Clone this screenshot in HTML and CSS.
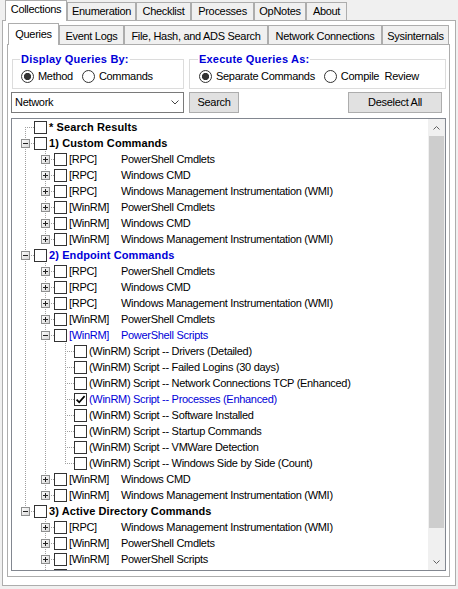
FILE: index.html
```html
<!DOCTYPE html>
<html>
<head>
<meta charset="utf-8">
<title>Collections</title>
<link rel="stylesheet" href="styles.css">
</head>
<body>
<svg class="defs" width="0" height="0" aria-hidden="true">
  <defs>
    <linearGradient id="bxg" x1="0" y1="0" x2="1" y2="1">
      <stop offset="0" stop-color="#ffffff"/>
      <stop offset="1" stop-color="#d6d6d6"/>
    </linearGradient>
    <symbol id="plus" viewBox="0 0 9 9">
      <rect x="0.5" y="0.5" width="8" height="8" fill="url(#bxg)" stroke="#8e8f8f"/>
      <path d="M2 4.5h5M4.5 2v5" stroke="#222"/>
    </symbol>
    <symbol id="minus" viewBox="0 0 9 9">
      <rect x="0.5" y="0.5" width="8" height="8" fill="url(#bxg)" stroke="#8e8f8f"/>
      <path d="M2 4.5h5" stroke="#222"/>
    </symbol>
    <symbol id="check" viewBox="0 0 11 11">
      <path d="M1.6 5.6l2.6 2.7 5.4-6.2" stroke="#000" stroke-width="1.7" fill="none"/>
    </symbol>
  </defs>
</svg>

<div class="window">
  <div class="tabstrip outer-tabs">
    <div class="tab active t-collections">Collections</div>
    <div class="tab t-enum">Enumeration</div>
    <div class="tab t-check">Checklist</div>
    <div class="tab t-proc">Processes</div>
    <div class="tab t-opnotes">OpNotes</div>
    <div class="tab t-about">About</div>
  </div>
  <div class="outer-panel">
    <div class="tabstrip inner-tabs">
      <div class="tab active t-queries">Queries</div>
      <div class="tab t-events">Event Logs</div>
      <div class="tab t-file">File, Hash, and ADS Search</div>
      <div class="tab t-net">Network Connections</div>
      <div class="tab t-sys">Sysinternals</div>
    </div>
    <div class="inner-panel">
      <div class="groups">
        <div class="group g1">
          <div class="group-title">Display Queries By:</div>
          <div class="radios">
            <label class="radio"><span class="dot on"></span>Method</label>
            <label class="radio"><span class="dot"></span>Commands</label>
          </div>
        </div>
        <div class="group g2">
          <div class="group-title">Execute Queries As:</div>
          <div class="radios">
            <label class="radio"><span class="dot on"></span>Separate Commands</label>
            <label class="radio"><span class="dot"></span>Compile&nbsp; Review</label>
          </div>
        </div>
      </div>

      <div class="toolbar">
        <div class="combo">
          <span class="combo-text">Network</span>
          <svg class="chev" width="8" height="5" viewBox="0 0 8 5"><path d="M0.5 0.5l3.5 3.5 3.5-3.5" stroke="#444" fill="none"/></svg>
        </div>
        <div class="btn btn-search">Search</div>
        <div class="btn btn-deselect">Deselect All</div>
      </div>

      <div class="tree">
        <div class="rows">
          <div class="row"><span class="exp first"></span><span class="cb"></span><span class="txt b">* Search Results</span></div>
          <div class="row"><span class="exp tee"><svg class="box"><use href="#minus"/></svg></span><span class="cb"></span><span class="txt b">1) Custom Commands</span></div>
          <div class="row"><span class="ind pipe"></span><span class="exp tee"><svg class="box"><use href="#plus"/></svg></span><span class="cb"></span><span class="txt"><span class="pfx">[RPC]</span>PowerShell Cmdlets</span></div>
          <div class="row"><span class="ind pipe"></span><span class="exp tee"><svg class="box"><use href="#plus"/></svg></span><span class="cb"></span><span class="txt"><span class="pfx">[RPC]</span>Windows CMD</span></div>
          <div class="row"><span class="ind pipe"></span><span class="exp tee"><svg class="box"><use href="#plus"/></svg></span><span class="cb"></span><span class="txt"><span class="pfx">[RPC]</span>Windows Management Instrumentation (WMI)</span></div>
          <div class="row"><span class="ind pipe"></span><span class="exp tee"><svg class="box"><use href="#plus"/></svg></span><span class="cb"></span><span class="txt"><span class="pfx">[WinRM]</span>PowerShell Cmdlets</span></div>
          <div class="row"><span class="ind pipe"></span><span class="exp tee"><svg class="box"><use href="#plus"/></svg></span><span class="cb"></span><span class="txt"><span class="pfx">[WinRM]</span>Windows CMD</span></div>
          <div class="row"><span class="ind pipe"></span><span class="exp ell"><svg class="box"><use href="#plus"/></svg></span><span class="cb"></span><span class="txt"><span class="pfx">[WinRM]</span>Windows Management Instrumentation (WMI)</span></div>

          <div class="row"><span class="exp tee"><svg class="box"><use href="#minus"/></svg></span><span class="cb"></span><span class="txt b blue">2) Endpoint Commands</span></div>
          <div class="row"><span class="ind pipe"></span><span class="exp tee"><svg class="box"><use href="#plus"/></svg></span><span class="cb"></span><span class="txt"><span class="pfx">[RPC]</span>PowerShell Cmdlets</span></div>
          <div class="row"><span class="ind pipe"></span><span class="exp tee"><svg class="box"><use href="#plus"/></svg></span><span class="cb"></span><span class="txt"><span class="pfx">[RPC]</span>Windows CMD</span></div>
          <div class="row"><span class="ind pipe"></span><span class="exp tee"><svg class="box"><use href="#plus"/></svg></span><span class="cb"></span><span class="txt"><span class="pfx">[RPC]</span>Windows Management Instrumentation (WMI)</span></div>
          <div class="row"><span class="ind pipe"></span><span class="exp tee"><svg class="box"><use href="#plus"/></svg></span><span class="cb"></span><span class="txt"><span class="pfx">[WinRM]</span>PowerShell Cmdlets</span></div>
          <div class="row"><span class="ind pipe"></span><span class="exp tee"><svg class="box"><use href="#minus"/></svg></span><span class="cb"></span><span class="txt blue"><span class="pfx">[WinRM]</span>PowerShell Scripts</span></div>
          <div class="row"><span class="ind pipe"></span><span class="ind pipe"></span><span class="exp tee"></span><span class="cb"></span><span class="txt">(WinRM) Script -- Drivers (Detailed)</span></div>
          <div class="row"><span class="ind pipe"></span><span class="ind pipe"></span><span class="exp tee"></span><span class="cb"></span><span class="txt">(WinRM) Script -- Failed Logins (30 days)</span></div>
          <div class="row"><span class="ind pipe"></span><span class="ind pipe"></span><span class="exp tee"></span><span class="cb"></span><span class="txt">(WinRM) Script -- Network Connections TCP (Enhanced)</span></div>
          <div class="row"><span class="ind pipe"></span><span class="ind pipe"></span><span class="exp tee"></span><span class="cb"><svg class="tick"><use href="#check"/></svg></span><span class="txt blue">(WinRM) Script -- Processes (Enhanced)</span></div>
          <div class="row"><span class="ind pipe"></span><span class="ind pipe"></span><span class="exp tee"></span><span class="cb"></span><span class="txt">(WinRM) Script -- Software Installed</span></div>
          <div class="row"><span class="ind pipe"></span><span class="ind pipe"></span><span class="exp tee"></span><span class="cb"></span><span class="txt">(WinRM) Script -- Startup Commands</span></div>
          <div class="row"><span class="ind pipe"></span><span class="ind pipe"></span><span class="exp tee"></span><span class="cb"></span><span class="txt">(WinRM) Script -- VMWare Detection</span></div>
          <div class="row"><span class="ind pipe"></span><span class="ind pipe"></span><span class="exp ell"></span><span class="cb"></span><span class="txt">(WinRM) Script -- Windows Side by Side (Count)</span></div>
          <div class="row"><span class="ind pipe"></span><span class="exp tee"><svg class="box"><use href="#plus"/></svg></span><span class="cb"></span><span class="txt"><span class="pfx">[WinRM]</span>Windows CMD</span></div>
          <div class="row"><span class="ind pipe"></span><span class="exp ell"><svg class="box"><use href="#plus"/></svg></span><span class="cb"></span><span class="txt"><span class="pfx">[WinRM]</span>Windows Management Instrumentation (WMI)</span></div>

          <div class="row"><span class="exp ell"><svg class="box"><use href="#minus"/></svg></span><span class="cb"></span><span class="txt b">3) Active Directory Commands</span></div>
          <div class="row"><span class="ind"></span><span class="exp tee"><svg class="box"><use href="#plus"/></svg></span><span class="cb"></span><span class="txt"><span class="pfx">[RPC]</span>Windows Management Instrumentation (WMI)</span></div>
          <div class="row"><span class="ind"></span><span class="exp tee"><svg class="box"><use href="#plus"/></svg></span><span class="cb"></span><span class="txt"><span class="pfx">[WinRM]</span>PowerShell Cmdlets</span></div>
          <div class="row"><span class="ind"></span><span class="exp tee"><svg class="box"><use href="#plus"/></svg></span><span class="cb"></span><span class="txt"><span class="pfx">[WinRM]</span>PowerShell Scripts</span></div>
          <div class="row"><span class="ind"></span><span class="exp tee"><svg class="box"><use href="#plus"/></svg></span><span class="cb"></span><span class="txt"><span class="pfx">[WinRM]</span>Windows CMD</span></div>
        </div>
        <div class="vscroll">
          <div class="arrow">
            <svg width="7" height="4" viewBox="0 0 7 4"><path d="M0.5 3.5l3-3 3 3" stroke="#606060" fill="none"/></svg>
          </div>
          <div class="track"><div class="thumb"></div></div>
          <div class="arrow">
            <svg width="7" height="4" viewBox="0 0 7 4"><path d="M0.5 0.5l3 3 3-3" stroke="#606060" fill="none"/></svg>
          </div>
        </div>
      </div>
    </div>
  </div>
</div>
</body>
</html>
```

FILE: styles.css
```css
* { box-sizing: border-box; }

html, body {
  margin: 0;
  padding: 0;
}

body {
  width: 458px;
  height: 589px;
  overflow: hidden;
  background: #f0f0f0;
  color: #000;
  font-family: "Liberation Sans", Arial, sans-serif;
  font-size: 11px;
  letter-spacing: -0.3px;
}

.defs {
  position: absolute;
  width: 0;
  height: 0;
  overflow: hidden;
}

.window {
  padding-left: 2px;
}

/* ---------- tabs ---------- */
.tabstrip {
  display: flex;
  align-items: flex-end;
}

.outer-tabs {
  height: 20px;
  padding-left: 3px;
}

.inner-tabs {
  height: 23px;
  padding-left: 1px;
}

.tab {
  flex: none;
  border: 1px solid #adadad;
  border-bottom: 0;
  background: #f0f0f0;
  text-align: center;
  white-space: nowrap;
  line-height: 17px;
}

.outer-tabs .tab { height: 18px; }
.outer-tabs .tab.active { height: 21px; }

.inner-tabs .tab { height: 19px; padding-top: 2px; }
.inner-tabs .tab.active { height: 22px; }

.tab.active {
  background: #fff;
  margin-bottom: -1px;
  position: relative;
  z-index: 1;
}

.t-collections { width: 62px; }
.t-enum { width: 69px; }
.t-check { width: 55px; }
.t-proc { width: 63px; }
.t-opnotes { width: 52px; }
.t-about { width: 41px; }

.t-queries { width: 51px; }
.t-events { width: 65px; }
.t-file { width: 144px; }
.t-net { width: 114px; }
.t-sys { width: 67px; }

.outer-panel {
  width: 454px;
  height: 566px;
  border: 1px solid #adadad;
  background: #fff;
  padding: 0 5px 8px 4px;
}

.inner-panel {
  width: 443px;
  height: 533px;
  border: 1px solid #adadad;
  background: #fff;
  padding: 0 3px;
}

/* ---------- group boxes ---------- */
.groups {
  display: flex;
  gap: 5px;
  margin: 14px 0 0 1px;
}

.group {
  height: 30px;
  border: 1px solid #dcdcdc;
}

.g1 { width: 172px; padding-left: 8px; }
.g2 { width: 257px; padding-left: 9px; }

.group-title {
  width: fit-content;
  height: 13px;
  line-height: 13px;
  margin: -7px 0 0 -1px;
  padding: 0 1px;
  background: #fff;
  color: #0000d8;
  font-weight: bold;
  letter-spacing: 0.2px;
}

.radios {
  display: flex;
  gap: 9px;
  margin-top: 4px;
}

.radio {
  display: flex;
  align-items: center;
  height: 13px;
  line-height: 13px;
  white-space: nowrap;
}

.dot {
  flex: none;
  width: 13px;
  height: 13px;
  margin-right: 4px;
  border: 1px solid #333;
  border-radius: 50%;
  background: #fff;
}

.dot.on {
  background: radial-gradient(circle, #333 0 3.3px, #fff 3.9px);
}

/* ---------- toolbar ---------- */
.toolbar {
  display: flex;
  margin-top: 3px;
  height: 21px;
}

.combo {
  width: 173px;
  height: 21px;
  border: 1px solid #7a7a7a;
  display: flex;
  align-items: center;
  justify-content: space-between;
  padding: 0 4px 0 3px;
  line-height: 19px;
}

.chev { flex: none; }

.btn {
  height: 21px;
  border: 1px solid #adadad;
  background: #e1e1e1;
  text-align: center;
  line-height: 19px;
  white-space: nowrap;
}

.btn-search {
  width: 50px;
  margin-left: 5px;
}

.btn-deselect {
  width: 94px;
  margin-left: auto;
  margin-right: 4px;
}

/* ---------- tree ---------- */
.tree {
  display: flex;
  margin-top: 5px;
  width: 435px;
  height: 453px;
  border: 1px solid #828790;
  background: #fff;
}

.rows {
  flex: 1;
  overflow: hidden;
  padding-left: 4px;
}

.row {
  display: flex;
  align-items: center;
  height: 16px;
  white-space: nowrap;
}

.ind {
  flex: none;
  width: 20px;
  height: 16px;
}

.exp {
  flex: none;
  width: 18px;
  height: 16px;
  display: flex;
  align-items: center;
}

.pipe {
  background: repeating-linear-gradient(to bottom, #a0a0a0 0 1px, transparent 1px 2px) 9px 0 / 1px 16px no-repeat;
}

.tee {
  background:
    repeating-linear-gradient(to bottom, #a0a0a0 0 1px, transparent 1px 2px) 9px 0 / 1px 16px no-repeat,
    repeating-linear-gradient(to right, #a0a0a0 0 1px, transparent 1px 2px) 9px 8px / 9px 1px no-repeat;
}

.ell {
  background:
    repeating-linear-gradient(to bottom, #a0a0a0 0 1px, transparent 1px 2px) 9px 0 / 1px 9px no-repeat,
    repeating-linear-gradient(to right, #a0a0a0 0 1px, transparent 1px 2px) 9px 8px / 9px 1px no-repeat;
}

.first {
  background:
    repeating-linear-gradient(to bottom, #a0a0a0 0 1px, transparent 1px 2px) 9px 8px / 1px 8px no-repeat,
    repeating-linear-gradient(to right, #a0a0a0 0 1px, transparent 1px 2px) 9px 8px / 9px 1px no-repeat;
}

.box {
  width: 9px;
  height: 9px;
  margin-left: 5px;
  display: block;
}

.cb {
  flex: none;
  width: 13px;
  height: 13px;
  border: 1px solid #333;
  background: #fff;
  display: flex;
  align-items: center;
  justify-content: center;
}

.tick {
  width: 11px;
  height: 11px;
  display: block;
}

.txt {
  margin-left: 2px;
  line-height: 16px;
}

.pfx {
  display: inline-block;
  width: 52px;
}

.b {
  font-weight: bold;
  letter-spacing: 0.1px;
}

.blue { color: #0000d8; }

/* ---------- scrollbar ---------- */
.vscroll {
  flex: none;
  width: 17px;
  background: #f0f0f0;
  display: flex;
  flex-direction: column;
}

.arrow {
  flex: none;
  height: 17px;
  display: flex;
  align-items: center;
  justify-content: center;
}

.track {
  flex: 1;
  padding: 0 1px;
}

.thumb {
  height: 392px;
  background: #cdcdcd;
}
```
